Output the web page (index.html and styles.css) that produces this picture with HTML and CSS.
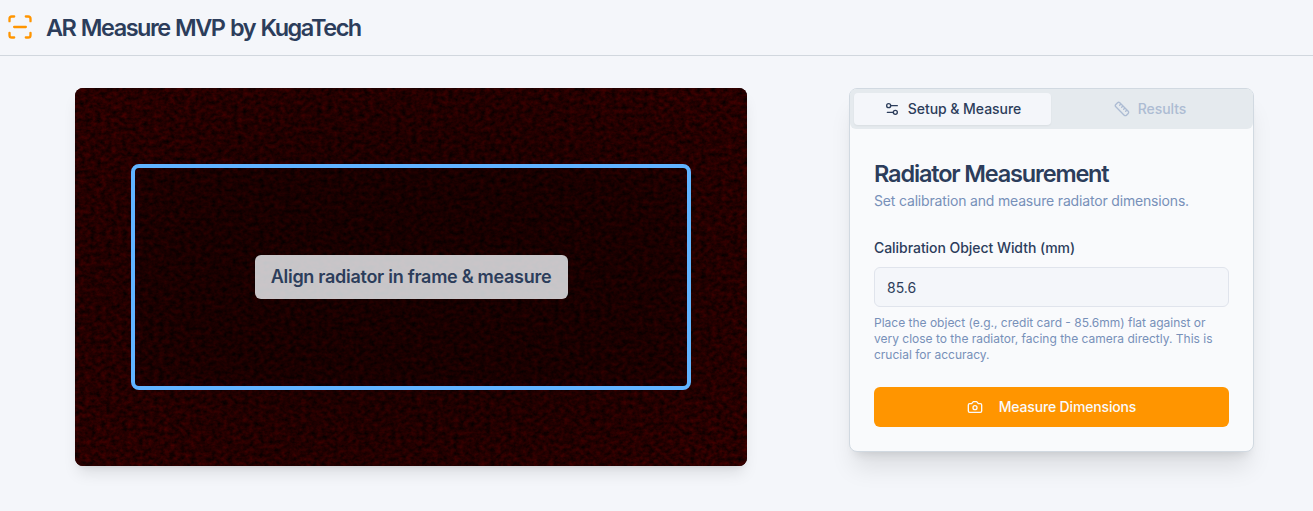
FILE: index.html
```html
<!DOCTYPE html>
<html lang="en">
<head>
<meta charset="utf-8">
<title>AR Measure MVP by KugaTech</title>
<link rel="stylesheet" href="styles.css">
</head>
<body>
<header class="header">
  <svg class="logo" viewBox="0 0 24 24"><path d="M3 7V5a2 2 0 0 1 2-2h2M17 3h2a2 2 0 0 1 2 2v2M21 17v2a2 2 0 0 1-2 2h-2M7 21H5a2 2 0 0 1-2-2v-2M7 12h10"/></svg>
  <h1 class="brand"><span>AR Measure MVP by KugaTech</span></h1>
</header>
<main class="main">
  <section class="camera">
    <svg class="feed" width="672" height="378">
      <defs>
        <filter id="grain" x="0" y="0" width="100%" height="100%" color-interpolation-filters="sRGB">
          <feTurbulence type="fractalNoise" baseFrequency="0.19 0.23" numOctaves="3" seed="8"/>
          <feColorMatrix values="0.32 0 0 0 -0.005  0 0 0 0 0  0 0 0 0 0  0 0 0 0 1"/>
        </filter>
        <radialGradient id="shade" cx="50%" cy="50%" r="65%">
          <stop offset="0" stop-color="#000" stop-opacity=".3"/>
          <stop offset=".5" stop-color="#000" stop-opacity=".24"/>
          <stop offset="1" stop-color="#000" stop-opacity="0"/>
        </radialGradient>
      </defs>
      <rect width="672" height="378" filter="url(#grain)"/>
      <rect width="672" height="378" fill="url(#shade)"/>
    </svg>
    <div class="frame"><p class="hint"><span>Align radiator in frame &amp; measure</span></p></div>
  </section>
  <section class="card">
    <nav class="tabs">
      <button class="tab tab-active"><svg class="icon" viewBox="0 0 24 24"><path d="M20 7h-9M14 17H5"/><circle cx="17" cy="17" r="3"/><circle cx="7" cy="7" r="3"/></svg><span>Setup &amp; Measure</span></button>
      <button class="tab tab-disabled"><svg class="icon" viewBox="0 0 24 24"><path d="M21.3 15.3a2.4 2.4 0 0 1 0 3.4l-2.6 2.6a2.4 2.4 0 0 1-3.4 0L2.7 8.7a2.41 2.41 0 0 1 0-3.4l2.6-2.6a2.41 2.41 0 0 1 3.4 0ZM14.5 12.5l2-2M11.5 9.5l2-2M8.5 6.5l2-2M17.5 15.5l2-2"/></svg><span>Results</span></button>
    </nav>
    <div class="panel">
      <h2 class="title"><span>Radiator Measurement</span></h2>
      <p class="subtitle"><span>Set calibration and measure radiator dimensions.</span></p>
      <label class="label" for="width"><span>Calibration Object Width (mm)</span></label>
      <input class="input" id="width" type="text" value="85.6">
      <p class="help"><span>Place the object (e.g., credit card - 85.6mm) flat against or<br>very close to the radiator, facing the camera directly. This is<br>crucial for accuracy.</span></p>
      <button class="measure"><svg class="icon" viewBox="0 0 24 24"><path d="M14.5 4h-5L7 7H4a2 2 0 0 0-2 2v9a2 2 0 0 0 2 2h16a2 2 0 0 0 2-2V9a2 2 0 0 0-2-2h-3l-2.5-3z"/><circle cx="12" cy="13" r="3"/></svg><span>Measure Dimensions</span></button>
    </div>
  </section>
</main>
</body>
</html>
```
FILE: styles.css
```css
* { box-sizing: border-box; margin: 0; padding: 0; }
body { height: 511px; overflow: hidden; background: #f4f6fa; color: #2c3d5b; font-family: Inter, "Liberation Sans", sans-serif; font-size: 14px; }
svg { display: block; fill: none; stroke: currentColor; stroke-width: 2; stroke-linecap: round; stroke-linejoin: round; }
button, input { font: inherit; color: inherit; border: 0; }
.header { display: flex; align-items: center; gap: 12px; height: 56px; padding-left: 6px; border-bottom: 1px solid #d1d7de; }
.logo { width: 28px; height: 28px; margin-bottom: 1px; color: #ff9500; }
.brand { font-size: 23.5px; line-height: 32px; font-weight: 600; letter-spacing: -1.34px; word-spacing: 1px; }
.brand { letter-spacing: -1.5px; }
.main { display: flex; align-items: flex-start; gap: 102px; padding: 32px 0 0 75px; }
.camera { display: grid; place-items: center; width: 672px; height: 378px; border-radius: 8px; overflow: hidden; background: #200000; box-shadow: 0 10px 15px -3px rgba(0,0,0,.1), 0 4px 6px -4px rgba(0,0,0,.1); }
.feed, .frame { grid-area: 1 / 1; }
.feed { stroke: none; }
.frame { z-index: 1; display: flex; align-items: center; justify-content: center; width: 560px; height: 226px; border: 4px solid #60b4ff; border-radius: 8px; background: rgba(0,0,0,.14); }
.hint { width: 313px; height: 44px; border-radius: 6px; background: rgba(244,246,250,.8); font-size: 18px; line-height: 44px; font-weight: 600; text-align: center; letter-spacing: -0.28px; white-space: nowrap; }
.card { width: 405px; height: 364px; border: 1px solid #d1d9e1; border-radius: 8px; background: #f9fafc; box-shadow: 0 20px 25px -5px rgba(0,0,0,.1), 0 8px 10px -6px rgba(0,0,0,.1); }
.tabs { display: grid; grid-template-columns: 197px 1fr; height: 40px; padding: 4px; border-radius: 6px; background: #e5eaee; }
.tab { display: flex; align-items: center; justify-content: center; gap: 8px; border-radius: 4px; background: none; font-weight: 500; }
.tab span, .measure span { padding-bottom: 2px; letter-spacing: -0.04px; }
.tab-active { background: #f4f6fa; box-shadow: 0 1px 2px rgba(0,0,0,.05); }
.tab-disabled { color: #adbcd3; }
.icon { width: 16px; height: 16px; }
.panel { padding: 29px 24px 0; }
.title { font-size: 23.5px; line-height: 32px; font-weight: 600; letter-spacing: -1.16px; }
.subtitle { margin-top: 1px; line-height: 20px; letter-spacing: -0.17px; color: #7790b9; }
.label { display: block; margin-top: 27px; line-height: 20px; font-weight: 500; letter-spacing: -0.05px; }
.input { display: block; width: 355px; height: 40px; margin-top: 9px; padding: 0 12px; border: 1px solid #e0e4ec; border-radius: 6px; background: #f4f6fa; }
.help { margin-top: 8px; font-size: 12px; line-height: 16px; color: #7790b9; white-space: nowrap; }
.measure { display: flex; align-items: center; justify-content: center; gap: 16px; width: 355px; height: 40px; margin-top: 24px; border-radius: 6px; background: #ff9500; color: #f9fafc; font-weight: 500; }
.measure span { letter-spacing: -0.16px; }
```
